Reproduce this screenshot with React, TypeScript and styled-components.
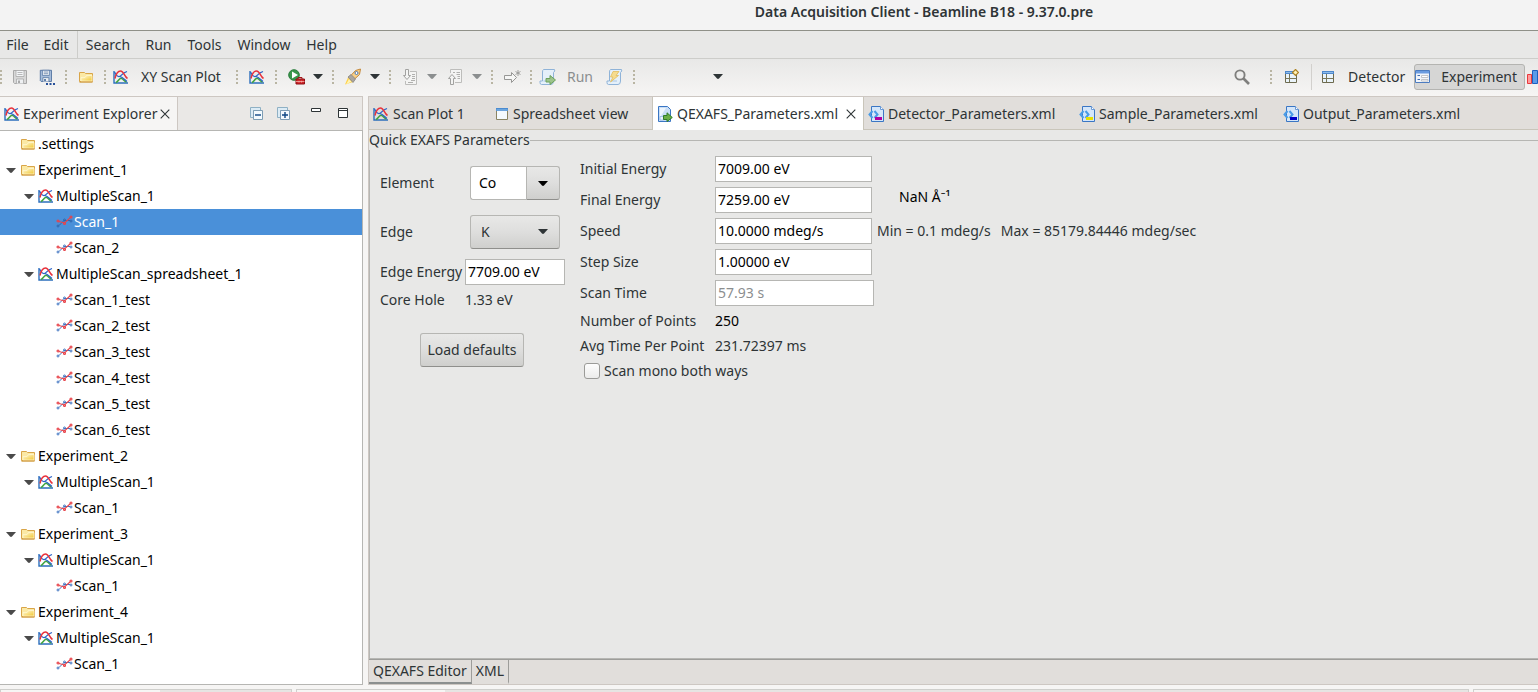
import React from "react";
import styled, { createGlobalStyle, css } from "styled-components";

const colors = {
  chrome: "#e8e8e7",
  light: "#f6f5f4",
  strip: "#e1dedb",
  line: "#cdc7c2",
  edge: "#b6b6b3",
  text: "#2e3436",
  selection: "#4a90d9",
};

const GlobalStyle = createGlobalStyle`
  * { box-sizing: border-box; }
  body {
    margin: 0;
    background: ${colors.light};
    color: ${colors.text};
    font: 14px/20px "Noto Sans", "Open Sans", sans-serif;
  }
  button, input, select { font: inherit; color: inherit; }
  svg { display: block; flex: none; }
`;

/* ---------- Icons ---------- */

const PlotIcon = () => (
  <svg width="16" height="16" viewBox="0 0 16 16" fill="none">
    <path d="M1 2V14H15" stroke="#2c6fbd" strokeWidth="1.4" />
    <path d="M3 13.5C5 12.5 6 9.5 8 9.3C10 9.3 11 12.5 13.5 13" stroke="#3fa33c" strokeWidth="1.5" />
    <path d="M1.5 3C3 6 4.5 8 6.5 7.5C8.500 6.8 9.5 4 14 2.500" stroke="#2b63c8" strokeWidth="1.3" />
    <path d="M7 7.5C9.500 8 11.5 10.5 14 12.500" stroke="#2b63c8" strokeWidth="1.2" />
    <path d="M2 9.5C3 5 4.5 2 7.5 2C11 2 11 7.5 14.500 9.5" stroke="#e8323c" strokeWidth="1.5" />
  </svg>
);

const FolderIcon = () => (
  <svg width="16" height="16" viewBox="0 0 16 16">
    <defs>
      <linearGradient id="folder" x1="0" y1="0" x2="1" y2="1">
        <stop offset="0" stopColor="#fffbe0" />
        <stop offset="1" stopColor="#f2c62e" />
      </linearGradient>
    </defs>
    <path d="M1.5 12.5V3.5H6.5L7.5 4.5H14.5V12.5Z" fill="#fbe9a5" stroke="#d9a548" />
    <path d="M3 12V8.5H7L8.5 6.5H14V12Z" fill="url(#folder)" stroke="#fff6cf" strokeWidth=".8" />
    <path d="M1.5 13.2H14.5" stroke="#cf9838" />
  </svg>
);

const ScanIcon = ({ selected = false }: { selected?: boolean }) => (
  <svg width="18" height="14" viewBox="0 0 18 14" fill="none">
    <g stroke={selected ? "#2f66ad" : "#3f74c2"}>
      <path d="M3 10.5L8 5.5L14 5.5" />
      <circle cx="2" cy="11" r="1" />
      <circle cx="8.5" cy="5" r="1" />
      <circle cx="15" cy="6" r="1" />
    </g>
    <g stroke="#e8434a" strokeWidth="1.1">
      <path d="M3 6.5L8.5 8L14.5 2.5" />
      <circle cx="2" cy="6" r="1" />
      <circle cx="8.5" cy="8.5" r="1" />
      <circle cx="15" cy="2" r="1" />
    </g>
  </svg>
);

const Caret = ({ color = "#2e3436" }: { color?: string }) => (
  <svg width="10" height="5" viewBox="0 0 10 5">
    <path d="M0 0H10L6 4.5Q5 5.3 4 4.5Z" fill={color} />
  </svg>
);

const SaveIcon = ({ all = false }: { all?: boolean }) => {
  const ink = all ? "#4a6d9c" : "#a9a9a9";
  const fill = all ? "#a7bedb" : "#d8d8d8";
  return (
    <svg width="16" height="16" viewBox="0 0 16 16">
      <g transform={all ? "scale(.86)" : undefined}>
        <path d="M1.5 1.5H14.5V14.5H2.5L1.5 13.5Z" fill={fill} stroke={ink} />
        <path d="M4 1.5H12V7.5H4Z" fill="#f3f5f7" stroke={ink} strokeWidth=".8" />
        <path d="M5.5 3.5H10.5M5.5 5.5H10.5" stroke={ink} strokeWidth=".8" />
        <path d="M4.5 14.5V10H11.5V14.5" fill="#eef0f2" stroke={ink} strokeWidth=".8" />
        <path d="M6 11.5H8V14H6Z" fill={ink} />
      </g>
      {all && <path d="M7 14H9V16H7ZM10.5 14H12.5V16H10.5ZM14 14H16V16H14Z" fill="#27509a" />}
    </svg>
  );
};

const RunToolIcon = () => (
  <svg width="18" height="18" viewBox="0 0 18 18">
    <circle cx="7" cy="7" r="5.3" fill="#39964a" stroke="#2a7d3c" />
    <path d="M5 3.5L11 7L5 10.5Z" fill="#fff" />
    <path d="M11 11V9.5H15V11" fill="none" stroke="#a31418" />
    <path d="M9 11H17.5V16H9Z" fill="#cf2428" stroke="#8f1014" />
    <path d="M9 13.5H17.5M12 12.8V14.5M14.5 12.8V14.5" stroke="#f5b0a8" strokeWidth=".8" />
  </svg>
);

const RocketIcon = () => (
  <svg width="18" height="18" viewBox="0 0 18 18">
    <path d="M1 16.5L4 9.5L9 14Z" fill="#ffd24a" />
    <path d="M2 16.5L5 11L7.5 13.5Z" fill="#fff3b5" />
    <path d="M5 9.5L11.5 2.5L16.5 1L15.5 6.500L8.500 13Z" fill="#f9cf86" stroke="#c58a3c" />
    <path d="M4 9L7 6.5L11.5 11L9 14.5Z" fill="#aaa6a1" stroke="#88847f" strokeWidth=".8" />
    <circle cx="12.5" cy="5" r="1.5" fill="#fff" stroke="#4b78b5" />
  </svg>
);

const AnnotationIcon = ({ up = false }: { up?: boolean }) => (
  <svg width="16" height="16" viewBox="0 0 16 16" fill="#f4f4f3" stroke="#a2a2a0">
    {up ? (
      <>
        <path d="M3.5 4V.5H14.5V13.5H8" stroke="#bdbdbb" />
        <path d="M6 3.5H8M9.5 3.5H13M9.5 5.5H13M10.5 7.5H13M10.5 9.5H13" stroke="#b0b0ae" />
        <path d="M3.5 15.5V9.5H1.5L5 5.5L8.5 9.5H6.5V15.5Z" />
      </>
    ) : (
      <>
        <path d="M8 2.5H14.5V15.5H3.5V12" stroke="#bdbdbb" />
        <path d="M10 5.5H13M10 7.5H13M10 9.5H13M9 11.5H13M6 13.5H11" stroke="#b0b0ae" />
        <path d="M3.5 .5V6.500H1.5L5 10.5L8.5 6.500H6.5V.5Z" />
      </>
    )}
  </svg>
);

const LastEditIcon = () => (
  <svg width="18" height="16" viewBox="0 0 18 16" fill="#f6f6f5" stroke="#979795">
    <path d="M1.5 6.5H8.5V3.5L13.5 8.5L8.5 13.5V10.5H1.5Z" />
    <path d="M15 1V7M12.5 2.5L17.5 5.5M17.5 2.5L12.5 5.5" fill="none" strokeWidth=".9" />
  </svg>
);

const ScriptIcon = ({ kind }: { kind: "run" | "bolt" }) => (
  <svg width="18" height="18" viewBox="0 0 18 18">
    <path
      d="M4.5 1.5H15.5Q16.500 3 14.5 4.500V13Q14.5 16.5 12 16.5H2.5Q1 16.5 1 14.5V13H3.500V4Q3.500 2 4.500 1.500Z"
      fill="#e5f0fa"
      stroke="#8fb3d8"
    />
    <path d="M4.5 13H11" fill="none" stroke="#a9c6e4" />
    {kind === "run" ? (
      <path d="M7 10.5H11V7.5L16.5 12L11 16.500V14H7Z" fill="#9cc48c" stroke="#6da25c" />
    ) : (
      <path d="M7 3.5H13L10 7.5H12.5L4.5 14L7 9H4.5Z" fill="#f6dc8e" stroke="#e2bc5c" strokeWidth=".8" />
    )}
  </svg>
);

const SearchIcon = () => (
  <svg width="16" height="16" viewBox="0 0 16 16" fill="none" stroke="#7f7f7d">
    <circle cx="6" cy="6" r="4.6" strokeWidth="1.9" />
    <path d="M9.5 9.5L15 15" strokeWidth="2.6" />
  </svg>
);

const PerspectiveIcon = ({ add = false }: { add?: boolean }) => (
  <svg width="16" height="16" viewBox="0 0 16 16">
    <path d="M2.5 3.5H13.5V13.5H2.5Z" fill="#eaf4fb" stroke="#6d6a4e" />
    <path d="M2 2H14V5H2Z" fill="#4f88cb" />
    <path d="M3 3.5H13" stroke="#8dbbe8" />
    <path d="M6.5 5V13M2.5 9.5H13.5" stroke="#7a7758" fill="none" />
    {add && <path d="M12.5 .5L15.5 3.5L12.5 6.5L9.5 3.5Z" fill="#fff2b8" stroke="#ad8324" strokeWidth="1.2" />}
  </svg>
);

const FormIcon = () => (
  <svg width="16" height="14" viewBox="0 0 16 14">
    <path d="M.5 .5H14.5V12.5H.5Z" fill="#f1f5fb" stroke="#4c7cc0" />
    <path d="M1 1H14V3.5H1Z" fill="#6a9be0" />
    <path d="M2.5 5.5H5M2.5 9.5H5" stroke="#3d6cb3" />
    <path d="M6.5 5.5H13V7.5H6.5ZM6.5 9.5H13V11H6.5Z" fill="#fff" stroke="#b6b8bd" strokeWidth=".8" />
  </svg>
);

const BarsIcon = () => (
  <svg width="16" height="16" viewBox="0 0 16 16">
    <path d="M.5 5.5H4.5V14.5H.5Z" fill="#ff9a9a" stroke="#e8393e" />
    <path d="M5.5 1.5H10.5V14.5H5.5Z" fill="#5b9bea" stroke="#1c5fc0" />
    <path d="M11.5 7.5H15.5V14.5H11.5Z" fill="#8fd18a" stroke="#3f9a3a" />
  </svg>
);

const SheetIcon = () => (
  <svg width="14" height="14" viewBox="0 0 14 14">
    <path d="M1.5 1.5H12.5V12.5H1.5Z" fill="#f4faff" stroke="#8a8463" />
    <path d="M1 1H13V4H1Z" fill="#4b8bd0" />
    <path d="M1.5 3H12.5" stroke="#8fc0ec" />
  </svg>
);

const XmlIcon = ({ mark }: { mark: string }) => (
  <svg width="16" height="16" viewBox="0 0 16 16">
    <path d="M3.5 .5H12.5L15.5 3.5V15.5H3.5Z" fill="#d4e6fa" stroke="#3a76c4" />
    <path d="M12.5 .5V3.5H15.5" fill="#fff" stroke="#6b9bd6" />
    <path d="M4.500 5L1.500 8.5L4.500 12M6.500 5L9.500 8.5L6.500 12" fill="none" stroke="#4a9be6" strokeWidth="2" />
    <path d="M7 11H14V14H7Z" fill={mark} />
  </svg>
);

const QexafsIcon = () => (
  <svg width="16" height="16" viewBox="0 0 16 16">
    <path d="M1.5 .5H10.5L13.5 3.5V15.5H1.5Z" fill="#c9def6" stroke="#3a76c4" />
    <path d="M3 2H9L4 10H3Z" fill="#edf5fd" />
    <path d="M3 10.5H6.5V14H3Z" fill="#eaf3fc" stroke="#8ab0de" strokeWidth=".7" />
    <path d="M6.5 9.5H10V6.8L15.3 11.5L10 15.5V13.5H6.5Z" fill="#6aae45" stroke="#2f7d27" />
  </svg>
);

const CloseIcon = () => (
  <svg width="10" height="10" viewBox="0 0 10 10" stroke="#2e3436" strokeWidth="1.1">
    <path d="M.7 .7L9.3 9.3M9.3 .7L.7 9.3" />
  </svg>
);

const TreeToolIcon = ({ plus = false }: { plus?: boolean }) => (
  <svg width="14" height="14" viewBox="0 0 14 14">
    <path d="M.5 10.5V.5H10.5V3.500H3.500V10.500Z" fill="#dcebf5" stroke="#8fb0c4" />
    <path d="M3.5 3.5H12.5V12.5H3.5Z" fill="#f3fafe" stroke="#7d9db4" />
    <path d={plus ? "M5 8H11M8 5V11" : "M5 8H11"} stroke="#0e4684" strokeWidth="1.4" />
  </svg>
);

const MinimizeIcon = () => (
  <svg width="12" height="14" viewBox="0 0 12 14">
    <path d="M.5 1.5H9.5V4.5H.5Z" fill="#fff" stroke="#2e3436" />
  </svg>
);

const MaximizeIcon = () => (
  <svg width="12" height="14" viewBox="0 0 12 14">
    <path d="M.5 1.5H9.5V10.5H.5ZM.5 3.5H9.5" fill="#fff" stroke="#2e3436" />
  </svg>
);

/* ---------- Window chrome ---------- */

const Page = styled.div`
  display: flex;
  flex-direction: column;
  height: 100vh;
  overflow: hidden;
`;

const TitleBar = styled.header`
  flex: none;
  height: 31px;
  padding: 2px 0 0 310px;
  border-bottom: 1px solid #8f9088;
  background: #f3f3f3;
  text-align: center;
`;

const Title = styled.h1`
  margin: 0;
  font-size: 14px;
  line-height: 20px;
  font-weight: 600;
`;

const MenuBar = styled.nav`
  flex: none;
  display: flex;
  height: 28px;
  border-bottom: 1px solid #cdcdca;
  background: ${colors.chrome};
`;

const MenuButton = styled.button<{ $width: number; $divided?: boolean }>`
  width: ${(p) => p.$width}px;
  padding: 0;
  border: 0;
  border-right: ${(p) => (p.$divided ? "1px solid #cdcdca" : "0")};
  background: none;
  text-align: center;
`;

const Toolbar = styled.div`
  flex: none;
  display: flex;
  align-items: center;
  height: 37px;
  padding-bottom: 2px;
  background: linear-gradient(${colors.chrome}, ${colors.light});
`;

const plainButton = css`
  display: flex;
  align-items: center;
  height: 26px;
  border: 0;
  background: none;
  white-space: nowrap;
`;

const ToolButton = styled.button`
  ${plainButton}
  justify-content: center;
  width: 27px;
  padding: 0;
`;

const CaretButton = styled(ToolButton)`
  width: 18px;
`;

const LabelledButton = styled.button<{ $width: number; $muted?: boolean }>`
  ${plainButton}
  gap: ${(p) => (p.$muted ? 10 : 12)}px;
  width: ${(p) => p.$width}px;
  padding: 0 2px;
  color: ${(p) => (p.$muted ? "#8b8e8f" : "inherit")};
`;

const Grip = styled.span`
  flex: none;
  width: 12px;
  height: 14px;
  background: repeating-linear-gradient(#b9b5a3 0 2px, transparent 2px 4px) center / 2px 14px no-repeat;
`;

const FirstGrip = styled(Grip)`
  width: 6px;
  background-position: 0 0;
`;

const EmptyCombo = styled.div`
  display: flex;
  justify-content: flex-end;
  width: 87px;
`;

const Perspectives = styled.div`
  display: flex;
  align-items: center;
  margin-left: auto;
`;

const QuickSearch = styled(ToolButton)`
  margin-right: 10px;
`;

const Rule = styled.span`
  width: 1px;
  height: 26px;
  margin: 0 6px 0 7px;
  background: #d2d0cd;
`;

const PerspectiveButton = styled.button<{ $active?: boolean }>`
  ${plainButton}
  gap: ${(p) => (p.$active ? 10 : 12)}px;
  padding: 0 ${(p) => (p.$active ? "7px 0 0" : "9px 0 2px")};
  ${(p) =>
    p.$active &&
    css`
      border: 1px solid #b4b4b1;
      border-radius: 3px;
      background: #d6d6d5;
    `}
`;

const ClippedButton = styled(ToolButton)`
  justify-content: flex-start;
  width: 13px;
  padding-left: 2px;
  overflow: hidden;
`;

/* ---------- Work area ---------- */

const Workbench = styled.main`
  flex: 1;
  display: flex;
  gap: 5px;
  min-height: 0;
`;

const Explorer = styled.section`
  flex: none;
  display: flex;
  flex-direction: column;
  width: 363px;
`;

const PanelHeader = styled.div`
  flex: none;
  display: flex;
  height: 34px;
  border: 1px solid ${colors.line};
  border-width: 1px 1px 0 0;
  background: #eae8e6;
`;

const ExplorerTab = styled.div`
  display: flex;
  align-items: center;
  gap: 3px;
  width: 178px;
  padding: 0 7px 0 4px;
  border-right: 1px solid ${colors.line};
  background: ${colors.light};
  white-space: nowrap;
`;

const TabClose = styled.button`
  display: flex;
  margin-left: auto;
  padding: 0;
  border: 0;
  background: none;
`;

const PanelTools = styled.div`
  display: flex;
  align-items: center;
  justify-content: flex-end;
  flex: 1;
  padding-right: 5px;
`;

const ToolGap = styled.span`
  width: 6px;
`;

const Tree = styled.ul`
  flex: 1;
  min-height: 0;
  margin: 0;
  padding: 0;
  overflow: hidden;
  border: 1px solid ${colors.edge};
  border-width: 1px 1px 1px 0;
  background: #fff;
  color: #000;
  list-style: none;
`;

const TreeRow = styled.li<{ $level: number; $selected: boolean }>`
  display: flex;
  align-items: center;
  height: 26px;
  padding-left: ${(p) => p.$level * 18 + 2}px;
  background: ${(p) => (p.$selected ? colors.selection : "transparent")};
  color: ${(p) => (p.$selected ? "#fff" : "inherit")};
`;

const Twisty = styled.span`
  display: flex;
  justify-content: center;
  width: 18px;
`;

const TreeIcon = styled.span`
  display: flex;
  width: 18px;
`;

const Editor = styled.section`
  flex: 1;
  display: flex;
  flex-direction: column;
  min-width: 0;
  border: 1px solid ${colors.line};
  border-width: 1px 0 1px 1px;
`;

const EditorTabs = styled.div`
  flex: none;
  display: flex;
  height: 33px;
  border-bottom: 1px solid #c9c5ba;
  background: ${colors.strip};
`;

const EditorTab = styled.div<{ $width: number; $active?: boolean }>`
  display: flex;
  align-items: center;
  gap: 4px;
  flex: none;
  width: ${(p) => p.$width}px;
  height: 33px;
  padding: 0 7px 0 4px;
  border: 0 solid #c9c5ba;
  white-space: nowrap;
  ${(p) =>
    p.$active &&
    css`
      border-width: 0 1px;
      background: #fff;
    `}
`;

const Body = styled.div`
  flex: 1;
  display: flex;
  min-height: 0;
  background: ${colors.chrome};
`;

const Group = styled.fieldset`
  flex: 1;
  min-width: 0;
  margin: 0;
  padding: 0 0 0 10px;
  border: 1px solid ${colors.edge};
  border-width: 1px 0 1px 1px;
`;

const GroupTitle = styled.legend`
  margin-left: -11px;
  padding: 0;
`;

const Columns = styled.div`
  display: flex;
  gap: 15px;
  padding-top: 6px;
`;

const LeftColumn = styled.div`
  display: flex;
  flex-direction: column;
  width: 185px;
  padding-top: 10px;
`;

const LeftRow = styled.div<{ $height: number; $after: number; $inset?: number }>`
  display: grid;
  grid-template-columns: ${(p) => 85 + (p.$inset ?? 0)}px 1fr;
  align-items: center;
  height: ${(p) => p.$height}px;
  margin-bottom: ${(p) => p.$after}px;
  padding-right: ${(p) => p.$inset ?? 0}px;
  white-space: nowrap;
`;

const raised = css`
  border: 1px solid #b6b6b3;
  border-bottom-color: #8f8f8c;
  border-radius: 3px;
  background: linear-gradient(#e8e8e7, #dededd 50%, #cfcfcd);
`;

const Combo = styled.div`
  display: flex;
  height: 34px;
`;

const ComboInput = styled.input`
  width: 56px;
  padding: 0 8px;
  border: 1px solid #b6b6b3;
  border-right: 0;
  border-radius: 3px 0 0 3px;
  background: #fff;
  color: #000;
`;

const ComboButton = styled.button`
  ${raised}
  display: flex;
  align-items: center;
  justify-content: center;
  flex: 1;
  padding: 0;
  border-radius: 0 3px 3px 0;
`;

const SelectBox = styled.div`
  position: relative;
  height: 34px;
`;

const Select = styled.select`
  ${raised}
  appearance: none;
  width: 100%;
  height: 100%;
  padding: 0 10px;
`;

const SelectArrow = styled.span`
  position: absolute;
  top: 14px;
  right: 12px;
  pointer-events: none;
`;

const Field = styled.input<{ $width: number }>`
  width: ${(p) => p.$width}px;
  height: 26px;
  padding: 0 2px 2px;
  border: 1px solid ${colors.edge};
  background: #fff;
  color: #000;
  &:disabled {
    color: #8b8e8f;
  }
`;

const PushButton = styled.button`
  ${raised}
  width: 104px;
  height: 34px;
  margin-left: 40px;
  padding: 0;
  white-space: nowrap;
`;

const RightColumn = styled.div`
  display: flex;
  flex-direction: column;
  gap: 5px;
  white-space: nowrap;
`;

const Row = styled.div`
  display: flex;
  align-items: center;
`;

const RowLabel = styled.label`
  width: 135px;
`;

const Strong = styled.output`
  color: #000;
`;

const WaveNumber = styled.output`
  align-self: flex-start;
  margin-left: 27px;
  color: #000;
`;

const Limits = styled.span`
  display: flex;
  gap: 10px;
  margin-left: 5px;
`;

const CheckLabel = styled.label`
  display: flex;
  align-items: center;
  gap: 4px;
  padding-left: 4px;
`;

const Check = styled.input`
  appearance: none;
  width: 16px;
  height: 16px;
  margin: 0;
  border: 1px solid #9b9b98;
  border-radius: 3px;
  background: linear-gradient(#fdfdfd, #ececeb);
`;

const PageTabs = styled.div`
  flex: none;
  display: flex;
  height: 25px;
  background: ${colors.strip};
  border-top: 1px solid #9d9d9a;
`;

const PageTab = styled.button<{ $active?: boolean }>`
  padding: 0 4px;
  border: 0 solid #9d9d9a;
  border-width: 0 1px 2px 0;
  border-bottom-color: ${(p) => (p.$active ? "#8b8f8f" : "transparent")};
  background: none;
  white-space: nowrap;
`;

const LowerPanels = styled.div`
  flex: none;
  display: flex;
  gap: 4px;
  height: 7px;
  padding-top: 4px;
`;

const LowerPanel = styled.div<{ $basis: string; $tab: string }>`
  flex: ${(p) => p.$basis};
  border: 1px solid #cfcfcc;
  border-bottom: 0;
  background: linear-gradient(${colors.light}, ${colors.light}) 0 0 / ${(p) => p.$tab} 100% no-repeat #e6e5e3;
`;

/* ---------- Content ---------- */

type Kind = "folder" | "multi" | "scan";
type Node = { kind: Kind; label: string; leaf?: boolean; selected?: boolean };

const folder = (label: string, leaf = false): Node => ({ kind: "folder", label, leaf });
const multi = (label: string): Node => ({ kind: "multi", label });
const scan = (label: string, selected = false): Node => ({ kind: "scan", label, leaf: true, selected });

const nodes: Node[] = [
  folder(".settings", true),
  folder("Experiment_1"),
  multi("MultipleScan_1"),
  scan("Scan_1", true),
  scan("Scan_2"),
  multi("MultipleScan_spreadsheet_1"),
  ...[1, 2, 3, 4, 5, 6].map((n) => scan(`Scan_${n}_test`)),
  ...[2, 3, 4].flatMap((n) => [folder(`Experiment_${n}`), multi("MultipleScan_1"), scan("Scan_1")]),
];

const levels: Record<Kind, number> = { folder: 0, multi: 1, scan: 2 };

const NodeIcon = ({ node }: { node: Node }) => {
  if (node.kind === "folder") return <FolderIcon />;
  if (node.kind === "multi") return <PlotIcon />;
  return <ScanIcon selected={node.selected} />;
};

const menus = [
  { label: "File", width: 35 },
  { label: "Edit", width: 43, divided: true },
  { label: "Search", width: 60 },
  { label: "Run", width: 41 },
  { label: "Tools", width: 51 },
  { label: "Window", width: 68 },
  { label: "Help", width: 47 },
];

const MainToolbar = () => (
  <Toolbar>
    <FirstGrip />
    <ToolButton aria-label="Save"><SaveIcon /></ToolButton>
    <ToolButton aria-label="Save all"><SaveIcon all /></ToolButton>
    <Grip />
    <ToolButton aria-label="Open"><FolderIcon /></ToolButton>
    <Grip />
    <LabelledButton $width={120}><PlotIcon />XY Scan Plot</LabelledButton>
    <Grip />
    <ToolButton aria-label="Plot"><PlotIcon /></ToolButton>
    <Grip />
    <ToolButton aria-label="Run external tool"><RunToolIcon /></ToolButton>
    <CaretButton aria-label="External tools"><Caret /></CaretButton>
    <Grip />
    <ToolButton aria-label="Launch"><RocketIcon /></ToolButton>
    <CaretButton aria-label="Launch options"><Caret /></CaretButton>
    <Grip />
    <ToolButton aria-label="Next annotation"><AnnotationIcon /></ToolButton>
    <CaretButton aria-label="Next annotation options"><Caret color="#8b8e8f" /></CaretButton>
    <ToolButton aria-label="Previous annotation"><AnnotationIcon up /></ToolButton>
    <CaretButton aria-label="Previous annotation options"><Caret color="#8b8e8f" /></CaretButton>
    <Grip />
    <ToolButton aria-label="Last edit location"><LastEditIcon /></ToolButton>
    <Grip />
    <LabelledButton $width={64} $muted><ScriptIcon kind="run" />Run</LabelledButton>
    <ToolButton aria-label="Quick script"><ScriptIcon kind="bolt" /></ToolButton>
    <Grip />
    <EmptyCombo>
      <CaretButton aria-label="Choose script"><Caret /></CaretButton>
    </EmptyCombo>
    <Perspectives>
      <QuickSearch aria-label="Search"><SearchIcon /></QuickSearch>
      <Grip />
      <ToolButton aria-label="Open perspective"><PerspectiveIcon add /></ToolButton>
      <Rule />
      <PerspectiveButton><PerspectiveIcon />Detector</PerspectiveButton>
      <PerspectiveButton $active><FormIcon />Experiment</PerspectiveButton>
      <ClippedButton aria-label="Plotting"><BarsIcon /></ClippedButton>
    </Perspectives>
  </Toolbar>
);

const fields = [
  { id: "initial", label: "Initial Energy", value: "7009.00 eV", width: 157 },
  { id: "final", label: "Final Energy", value: "7259.00 eV", width: 157 },
  { id: "speed", label: "Speed", value: "10.0000 mdeg/s", width: 157 },
  { id: "step", label: "Step Size", value: "1.00000 eV", width: 157 },
  { id: "time", label: "Scan Time", value: "57.93 s", width: 159, disabled: true },
];

const ParameterForm = () => (
  <Group>
    <GroupTitle>Quick EXAFS Parameters</GroupTitle>
    <Columns>
      <LeftColumn>
        <LeftRow $height={34} $after={15} $inset={5}>
          <label htmlFor="element">Element</label>
          <Combo>
            <ComboInput id="element" defaultValue="Co" />
            <ComboButton aria-label="Choose element"><Caret color="#000" /></ComboButton>
          </Combo>
        </LeftRow>
        <LeftRow $height={34} $after={10} $inset={5}>
          <label htmlFor="edge">Edge</label>
          <SelectBox>
            <Select id="edge" defaultValue="K">
              <option>K</option>
            </Select>
            <SelectArrow><Caret /></SelectArrow>
          </SelectBox>
        </LeftRow>
        <LeftRow $height={26} $after={5}>
          <label htmlFor="edge-energy">Edge Energy</label>
          <Field id="edge-energy" $width={100} defaultValue="7709.00 eV" />
        </LeftRow>
        <LeftRow $height={20} $after={23}>
          <label htmlFor="core-hole">Core Hole</label>
          <output id="core-hole">1.33 eV</output>
        </LeftRow>
        <PushButton>Load defaults</PushButton>
      </LeftColumn>
      <RightColumn>
        {fields.map((f) => (
          <Row key={f.id}>
            <RowLabel htmlFor={f.id}>{f.label}</RowLabel>
            <Field id={f.id} $width={f.width} defaultValue={f.value} disabled={f.disabled} />
            {f.id === "final" && <WaveNumber>NaN Å⁻¹</WaveNumber>}
            {f.id === "speed" && (
              <Limits>
                <span>Min = 0.1 mdeg/s</span>
                <span>Max = 85179.84446 mdeg/sec</span>
              </Limits>
            )}
          </Row>
        ))}
        <Row>
          <RowLabel htmlFor="points">Number of Points</RowLabel>
          <Strong id="points">250</Strong>
        </Row>
        <Row>
          <RowLabel htmlFor="average">Avg Time Per Point</RowLabel>
          <output id="average">231.72397 ms</output>
        </Row>
        <CheckLabel>
          <Check type="checkbox" />
          Scan mono both ways
        </CheckLabel>
      </RightColumn>
    </Columns>
  </Group>
);

export default function App() {
  return (
    <Page>
      <GlobalStyle />
      <TitleBar>
        <Title>Data Acquisition Client - Beamline B18 - 9.37.0.pre</Title>
      </TitleBar>
      <MenuBar>
        {menus.map((m) => (
          <MenuButton key={m.label} $width={m.width} $divided={m.divided}>{m.label}</MenuButton>
        ))}
      </MenuBar>
      <MainToolbar />
      <Workbench>
        <Explorer>
          <PanelHeader>
            <ExplorerTab>
              <PlotIcon />
              Experiment Explorer
              <TabClose aria-label="Close Experiment Explorer"><CloseIcon /></TabClose>
            </ExplorerTab>
            <PanelTools>
              <ToolButton aria-label="Collapse all"><TreeToolIcon /></ToolButton>
              <ToolButton aria-label="Expand all"><TreeToolIcon plus /></ToolButton>
              <ToolGap />
              <ToolButton aria-label="Minimize"><MinimizeIcon /></ToolButton>
              <ToolButton aria-label="Maximize"><MaximizeIcon /></ToolButton>
            </PanelTools>
          </PanelHeader>
          <Tree role="tree">
            {nodes.map((node, i) => (
              <TreeRow
                key={i}
                role="treeitem"
                aria-level={levels[node.kind] + 1}
                aria-selected={!!node.selected}
                $level={levels[node.kind]}
                $selected={!!node.selected}
              >
                <Twisty>{!node.leaf && <Caret color="#4a4a4a" />}</Twisty>
                <TreeIcon><NodeIcon node={node} /></TreeIcon>
                {node.label}
              </TreeRow>
            ))}
          </Tree>
        </Explorer>
        <Editor>
          <EditorTabs>
            <EditorTab $width={122}><PlotIcon />Scan Plot 1</EditorTab>
            <EditorTab $width={161}><SheetIcon />Spreadsheet view</EditorTab>
            <EditorTab $width={212} $active>
              <QexafsIcon />
              QEXAFS_Parameters.xml
              <TabClose aria-label="Close QEXAFS_Parameters.xml"><CloseIcon /></TabClose>
            </EditorTab>
            <EditorTab $width={211}><XmlIcon mark="#b4009e" />Detector_Parameters.xml</EditorTab>
            <EditorTab $width={204}><XmlIcon mark="#e8e000" />Sample_Parameters.xml</EditorTab>
            <EditorTab $width={180}><XmlIcon mark="#0000c8" />Output_Parameters.xml</EditorTab>
          </EditorTabs>
          <Body>
            <ParameterForm />
          </Body>
          <PageTabs>
            <PageTab $active>QEXAFS Editor</PageTab>
            <PageTab>XML</PageTab>
          </PageTabs>
        </Editor>
      </Workbench>
      <LowerPanels>
        <LowerPanel $basis="0 0 292px" $tab="159px" />
        <LowerPanel $basis="1" $tab="148px" />
        <LowerPanel $basis="0 0 65px" $tab="100%" />
      </LowerPanels>
    </Page>
  );
}
